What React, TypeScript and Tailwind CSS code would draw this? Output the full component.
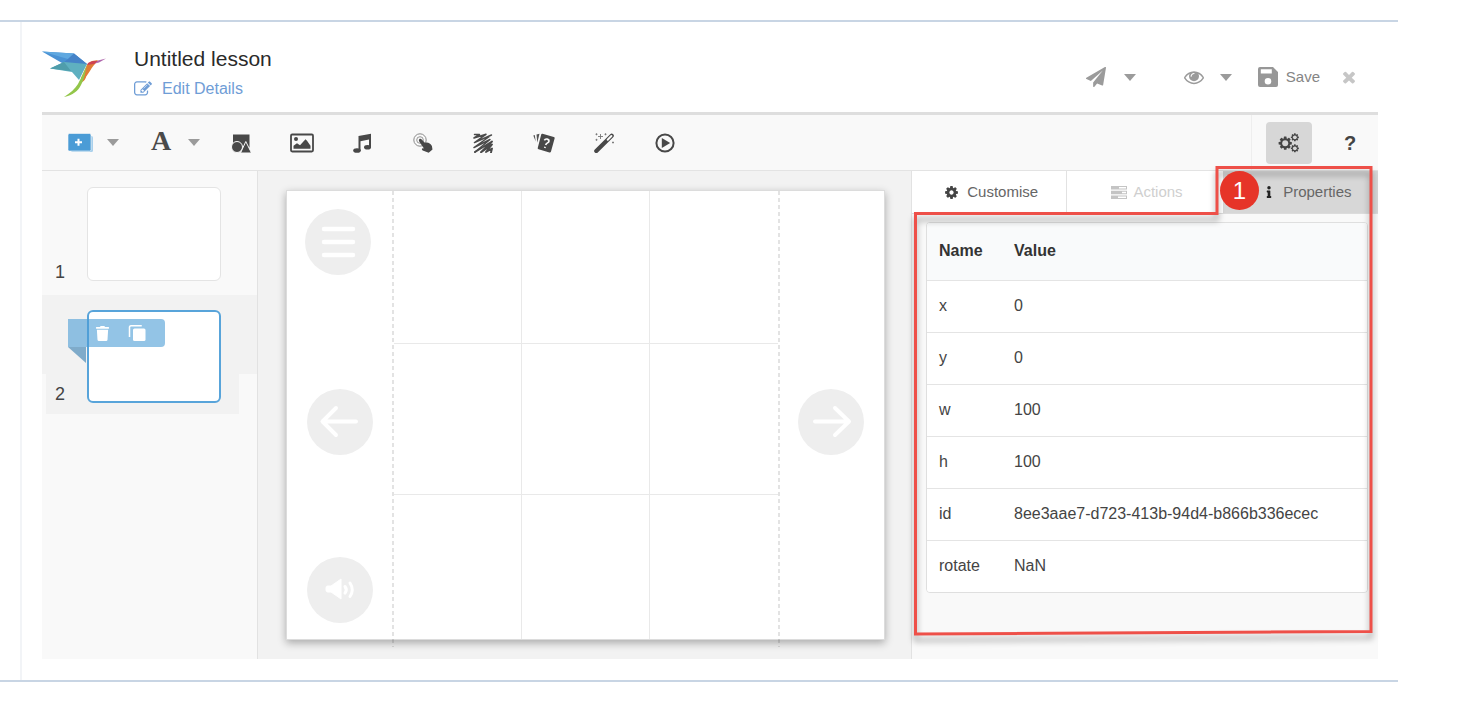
import type { ReactNode } from 'react';
import { FaInfo, FaTrash } from 'react-icons/fa';

const COG =
  'M1152 896q0-106-75-181t-181-75-181 75-75 181 75 181 181 75 181-75 75-181zm512-109v222q0 12-8 23t-20 13l-185 28q-19 54-39 91 35 50 107 138 10 12 10 25t-9 23q-27 37-99 108t-94 71q-12 0-26-9l-138-108q-44 23-91 38-16 136-29 186-7 28-36 28h-222q-14 0-24.5-8.5t-11.5-21.5l-28-184q-49-16-90-37l-141 107q-10 9-25 9-14 0-25-11-126-114-165-168-7-10-7-23 0-12 8-23 15-21 51-66.5t54-70.5q-27-50-41-99l-183-27q-13-2-21-12.5t-8-23.5v-222q0-12 8-23t19-13l186-28q14-46 39-92-40-57-107-138-10-12-10-24 0-10 9-23 26-36 98.5-107.5t94.5-71.5q13 0 26 10l138 107q44-23 91-38 16-136 29-186 7-28 36-28h222q14 0 24.5 8.5t11.5 21.5l28 184q49 16 90 37l142-107q9-9 24-9 13 0 25 10 129 119 165 170 7 8 7 22 0 12-8 23-15 21-51 66.5t-54 70.5q26 50 41 98l183 28q13 2 21 12.5t8 23.5z';
const EYE =
  'M1664 960q-152-236-381-353 61 104 61 225 0 185-131.5 316.5t-316.5 131.5-316.5-131.5-131.5-316.5q0-121 61-225-229 117-381 353 133 205 333.5 326.5t434.5 121.5 434.5-121.5 333.5-326.5zm-720-384q0-20-14-34t-34-14q-125 0-214.5 89.5t-89.5 214.5q0 20 14 34t34 14 34-14 14-34q0-86 61-147t147-61q20 0 34-14t14-34zm848 384q0 34-20 69-140 230-376.5 368.5t-499.5 138.5-499.5-139-376.5-368q-20-35-20-69t20-69q140-229 376.5-368t499.5-139 499.5 139 376.5 368q20 35 20 69z';
const EDIT =
  'M888 1184l116-116-152-152-116 116v56h96v96h56zm440-720q-16-16-33 1l-350 350q-17 17-1 33t33-1l350-350q17-17 1-33zm80 594v190q0 119-84.5 203.5t-203.5 84.5h-832q-119 0-203.5-84.5t-84.5-203.5v-832q0-119 84.5-203.5t203.5-84.5h832q63 0 117 25 15 7 18 23 3 17-9 29l-49 49q-14 14-32 8-23-6-45-6h-832q-66 0-113 47t-47 113v832q0 66 47 113t113 47h832q66 0 113-47t47-113v-126q0-13 9-22l64-64q15-15 35-7t20 29zm-96-738l288 288-672 672h-288v-288zm444 132l-92 92-288-288 92-92q28-28 68-28t68 28l152 152q28 28 28 68t-28 68z';
const PLANE =
  'M1764 11q33 24 27 64l-256 1536q-5 29-32 45-14 8-31 8-11 0-24-5l-453-185-242 295q-18 23-49 23-13 0-22-4-19-7-30.5-23.5t-11.5-36.5v-349l864-1059-1069 925-395-162q-37-14-40-55-2-40 32-59l1664-960q15-9 32-9 20 0 36 11z';
const TIMES =
  'M1490 1322q0 40-28 68l-136 136q-28 28-68 28t-68-28l-294-294-294 294q-28 28-68 28t-68-28l-136-136q-28-28-28-68t28-68l294-294-294-294q-28-28-28-68t28-68l136-136q28-28 68-28t68 28l294 294 294-294q28-28 68-28t68 28l136 136q28 28 28 68t-28 68l-294 294 294 294q28 28 28 68z';

function Glyph({ d, className }: { d: string; className: string }) {
  return (
    <svg viewBox="0 0 1792 1792" fill="currentColor" aria-hidden="true" className={className}>
      <path d={d} />
    </svg>
  );
}

function Caret() {
  return (
    <svg viewBox="0 0 12 7" className="h-[7px] w-3 fill-[#9b9b9b]" aria-hidden="true">
      <path d="M0 0h12L6 7z" />
    </svg>
  );
}

function CaretButton({ label, className }: { label: string; className?: string }) {
  return (
    <button type="button" aria-label={label} className={`flex h-10 w-5 items-center justify-center ${className ?? ''}`}>
      <Caret />
    </button>
  );
}

function Logo() {
  return (
    <svg viewBox="0 0 64 48" className="h-12 w-16" aria-hidden="true">
      <path d="M0 .5L32 2.500L45 13L20 12z" fill="#4a92d4" />
      <path d="M0 .5L32 2.500L26 8z" fill="#5fa8e0" />
      <path d="M26 8l6-5.500L45 13l-2 2-22-3z" fill="#4583c8" />
      <path d="M8 17.500L22 11l23 2-8 16-7-8z" fill="#5fb0c0" />
      <path d="M8 17.500L22 11l7 9z" fill="#4f9dab" />
      <path d="M49 12c-5 4-4 9-5 14-1 3-2 4-4 5l-1-4 6-13z" fill="#e57b33" />
      <path d="M45 14l5-4 6-1-3 4c-3 3-6 9-12 17z" fill="#e07c36" />
      <path d="M45 14c1-3 4-4 8-4h4l-5 3z" fill="#cf4352" />
      <path d="M56 9.500l8-2-7 4-4 1z" fill="#b068ad" />
      <path d="M45 14c-3 7-6 13-9 19-3 5-8 9-14 13 9-2 14-6 17-12 3-5 4-12 6-20z" fill="#93c64a" />
    </svg>
  );
}

function AddSlideIcon() {
  return (
    <svg viewBox="0 0 26 20" className="h-5 w-[26px]" aria-hidden="true">
      <rect x="3" y="3" width="22" height="16" rx="1.5" fill="#a9d0ec" />
      <rect x="0" y="0.5" width="23" height="17.5" rx="1.5" fill="#4b9cd6" stroke="#f9f9f9" strokeWidth="0.6" />
      <path d="M10.500 5.800v7M7 9.300h7" stroke="#fff" strokeWidth="2" />
    </svg>
  );
}

function ShapesIcon() {
  return (
    <svg viewBox="0 0 20 20" className="size-5" aria-hidden="true">
      <rect x="2" y="1.500" width="16.500" height="13" fill="#484848" />
      <circle cx="6" cy="14" r="5.500" fill="#484848" stroke="#f9f9f9" strokeWidth="1" />
      <path d="M14.800 8.500L20.500 20h-11z" fill="#484848" stroke="#f9f9f9" strokeWidth="1" />
    </svg>
  );
}

function ImageIcon() {
  return (
    <svg viewBox="0 0 24 20" className="h-5 w-6" aria-hidden="true">
      <rect x="1" y="1.500" width="22" height="17" rx="1.200" fill="none" stroke="#484848" strokeWidth="1.800" />
      <circle cx="6" cy="6" r="2" fill="#484848" />
      <path d="M3.500 15.800v-3l3.500-2.500 3 2 5.500-6 1.500 1.500 3.500 5v3z" fill="#484848" />
    </svg>
  );
}

function MusicIcon() {
  return (
    <svg viewBox="0 0 20 20" className="size-5" aria-hidden="true">
      <path d="M6.500 3L19 .8v13.500h-2V6.500l-8.500 1.700V18h-2z" fill="#484848" />
      <ellipse cx="5" cy="17.500" rx="3.800" ry="2.300" fill="#484848" />
      <ellipse cx="15.500" cy="14.200" rx="3.500" ry="2.300" fill="#484848" />
    </svg>
  );
}

function TouchIcon() {
  return (
    <svg viewBox="0 0 20 20" className="size-5" aria-hidden="true">
      <circle cx="7" cy="7" r="6.200" fill="none" stroke="#8a8a8a" strokeWidth="1" />
      <circle cx="7" cy="7" r="3.300" fill="none" stroke="#8a8a8a" strokeWidth="0.900" />
      <path d="M6.300 6.300c1-.9 1.900-.3 2.600.5l3 3c3-1 5.500.6 7 3.200l.6 3.500-3.800 3.200-6-2.300c-1.200-.6-1.200-2.300.5-2.100l.8.1-4.500-6.500c-.6-.9-.9-1.900-.2-2.600z" fill="#484848" />
    </svg>
  );
}

function ScribbleIcon() {
  return (
    <svg viewBox="0 0 20 20" className="size-5" fill="none" stroke="#4a4a4a" strokeLinejoin="round" strokeLinecap="round" aria-hidden="true">
      <path d="M1.500 1.500h5L1 5l12-3.700L1.500 9.500 18.500 2 1 14.500 17 6.500 2 19" strokeWidth="1.500" />
      <path d="M2 19L19 8.500 8 19.300l11-7.800-6 7.500 6-3.500-1 4" strokeWidth="1.900" />
    </svg>
  );
}

function CardsIcon() {
  return (
    <svg viewBox="0 0 22 20" className="h-5 w-[22px]" aria-hidden="true">
      <path d="M.3 2.500l1.500-.6.9 6.500zM3.500 1.500l3-.8-2.200 9z" fill="#555" />
      <path d="M9.500.8L20.800 4c.8.2 1 .7.8 1.400L18 18.500c-.3.900-.8 1.200-1.600 1L5.600 16.300c-.8-.2-1-.8-.8-1.500L8.200 1.600c.2-.7.6-1 1.300-.8z" fill="#484848" />
      <path d="M11.400 7.300c1-2.200 4.900-1.400 4.500 1-.3 1.700-2.800 1.500-3.200 3.700M12.100 13.700l-.3 1.300" fill="none" stroke="#f9f9f9" strokeWidth="1.700" />
    </svg>
  );
}

function WandIcon() {
  return (
    <svg viewBox="0 0 20 20" className="size-5" aria-hidden="true">
      <path d="M2.300 18L17.700 2.800" stroke="#484848" strokeWidth="4.200" strokeLinecap="round" />
      <path d="M13.700 6.700l3.700-3.700" stroke="#f9f9f9" strokeWidth="2" strokeLinecap="round" />
      <path d="M6.500 1v5M4 3.500h5M2.500.3v2M1.500 1.300h2M11.500.3v2M10.500 1.300h2M2.500 5.800v2M1.500 6.800h2M19 8.500v2M18 9.500h2" stroke="#777" strokeWidth="0.900" />
    </svg>
  );
}

function PlayIcon() {
  return (
    <svg viewBox="0 0 20 20" className="size-5" aria-hidden="true">
      <circle cx="10" cy="10" r="8.600" fill="none" stroke="#484848" strokeWidth="2" />
      <path d="M6.800 5l8.400 5-8.400 5z" fill="#484848" />
    </svg>
  );
}

function Gear({ transform, hole }: { transform: string; hole: number }) {
  return (
    <g transform={transform}>
      <path d={COG} />
      <circle cx="896" cy="896" r={hole} fill="#d7d7d7" />
    </g>
  );
}

function GearsIcon() {
  return (
    <svg viewBox="0 0 22 20" className="h-5 w-[22px] fill-[#444]" aria-hidden="true">
      <Gear transform="translate(-0.500 2.500) scale(0.0086)" hole={350} />
      <Gear transform="translate(12.200 -0.300) scale(0.0052)" hole={360} />
      <Gear transform="translate(12.200 10.700) scale(0.0052)" hole={360} />
    </svg>
  );
}

function SaveIcon() {
  return (
    <svg viewBox="0 0 20 20" className="size-5" aria-hidden="true">
      <path
        fillRule="evenodd"
        fill="#979797"
        d="M2 0h13l5 5v13a2 2 0 0 1-2 2H2a2 2 0 0 1-2-2V2a2 2 0 0 1 2-2zm.8 2.300v4.200h11V2.300zM10 11a3.300 3.300 0 1 0 0 6.600A3.300 3.300 0 0 0 10 11z"
      />
    </svg>
  );
}

const tools: { label: string; icon: ReactNode }[] = [
  { label: 'Shapes', icon: <ShapesIcon /> },
  { label: 'Image', icon: <ImageIcon /> },
  { label: 'Audio', icon: <MusicIcon /> },
  { label: 'Hotspot', icon: <TouchIcon /> },
  { label: 'Scratch', icon: <ScribbleIcon /> },
  { label: 'Flashcards', icon: <CardsIcon /> },
  { label: 'Effects', icon: <WandIcon /> },
  { label: 'Video', icon: <PlayIcon /> },
];

const properties = [
  ['x', '0'],
  ['y', '0'],
  ['w', '100'],
  ['h', '100'],
  ['id', '8ee3aae7-d723-413b-94d4-b866b336ecec'],
  ['rotate', 'NaN'],
];

function Header() {
  return (
    <header className="flex h-[90px] items-center">
      <div className="mt-4 w-[92px] shrink-0">
        <Logo />
      </div>
      <div className="mt-4 flex-1">
        <h1 className="text-[21px] leading-7 text-[#2a2a2a]">Untitled lesson</h1>
        <a href="#details" className="flex items-center gap-2.5 text-base leading-8 text-[#6f9dd6]">
          <Glyph d={EDIT} className="size-[18px]" />
          Edit Details
        </a>
      </div>
      <div className="mt-5 flex items-center pr-5 text-[#9b9b9b]">
        <button type="button" aria-label="Publish">
          <Glyph d={PLANE} className="size-5" />
        </button>
        <CaretButton label="Publish options" className="ml-3.5" />
        <button type="button" aria-label="Preview" className="ml-11">
          <Glyph d={EYE} className="size-5" />
        </button>
        <CaretButton label="Preview options" className="ml-3" />
        <button type="button" className="ml-[22px] flex items-center gap-2 text-[15px] text-[#858585]">
          <SaveIcon />
          Save
        </button>
        <button type="button" aria-label="Close" className="ml-5 text-[#c6c6c6]">
          <Glyph d={TIMES} className="size-[18px]" />
        </button>
      </div>
    </header>
  );
}

function Toolbar() {
  return (
    <div className="flex h-[59px] items-center border-t-[3px] border-b border-t-[#dedede] border-b-[#e3e3e3] bg-[#f9f9f9]">
      <button type="button" aria-label="Add slide" className="ml-4 flex h-10 w-[45px] items-center justify-center">
        <AddSlideIcon />
      </button>
      <CaretButton label="Add slide options" />
      <button type="button" className="ml-5 h-10 w-9 pb-1 font-['Liberation_Serif',serif] text-[28px] font-bold leading-9 text-[#4a4a4a]">
        A
      </button>
      <CaretButton label="Text options" className="ml-[5px]" />
      <div className="ml-[7px] flex w-[484px]">
        {tools.map((tool) => (
          <button key={tool.label} type="button" aria-label={tool.label} className="flex h-10 flex-1 items-center justify-center">
            {tool.icon}
          </button>
        ))}
      </div>
      <div className="ml-auto flex h-full w-[127px] items-center border-l border-[#eeeeee] pl-3.5">
        <button type="button" aria-label="Settings" className="flex h-[42px] w-[46px] items-center justify-center rounded bg-[#d7d7d7]">
          <GearsIcon />
        </button>
        <button type="button" className="ml-[22px] w-8 text-xl font-bold text-[#444]">
          ?
        </button>
      </div>
    </div>
  );
}

function SlideList() {
  return (
    <ol className="w-[216px] shrink-0 border-r border-[#e2e2e2] bg-[#f9f9f9] text-lg text-[#444]">
      <li className="flex h-[124px] items-start pt-4">
        <span className="w-[45px] pt-[71px] pl-[13px] leading-7">1</span>
        <button type="button" aria-label="Slide 1" className="h-[94px] w-[134px] rounded-md border border-[#e4e4e4] bg-white" />
      </li>
      <li className="relative flex h-[119px] items-start bg-[linear-gradient(#f2f2f2,#f2f2f2),linear-gradient(#f2f2f2,#f2f2f2)] bg-no-repeat pt-[15px] [background-position:0_0,4px_0] [background-size:100%_79px,193px_100%]">
        <span className="w-[45px] pt-[70px] pl-[13px] leading-7">2</span>
        <button type="button" aria-label="Slide 2" className="h-[93px] w-[134px] rounded-md border-2 border-[#58a4da] bg-white" />
        <div className="absolute top-6 left-[26px] flex h-7 w-[97px] items-center gap-[18px] rounded-r bg-[#4b9cd6]/60 pl-[27px] text-white">
          <button type="button" aria-label="Delete slide">
            <FaTrash className="size-[15px]" />
          </button>
          <button type="button" aria-label="Duplicate slide">
            <svg viewBox="0 0 18 18" className="size-[18px]" aria-hidden="true">
              <path d="M13 2.500V1.800H3A1.500 1.500 0 0 0 1.500 3v10" fill="none" stroke="#fff" strokeWidth="1.500" />
              <rect x="5" y="4.500" width="12.500" height="12.500" rx="1.500" fill="#fff" />
            </svg>
          </button>
          <svg viewBox="0 0 18 16" className="absolute top-full left-0 h-4 w-[18px] fill-[#7fabca]" aria-hidden="true">
            <path d="M0 0h18v16z" />
          </svg>
        </div>
      </li>
    </ol>
  );
}

function RoundButton({ label, className, children }: { label: string; className: string; children: ReactNode }) {
  return (
    <button type="button" aria-label={label} className={`flex size-[66px] items-center justify-center rounded-full bg-[#eeeeee] ${className}`}>
      <svg viewBox="0 0 66 66" className="size-[66px]" fill="none" stroke="#fff" strokeWidth="4.500" strokeLinecap="round" strokeLinejoin="round" aria-hidden="true">
        {children}
      </svg>
    </button>
  );
}

function Dashes() {
  return <div className="-mb-2 w-[2px] bg-[repeating-linear-gradient(#0000001c_0_4px,transparent_4px_7px)]" />;
}

const cells = [
  'border-r border-b',
  'border-r border-b',
  'border-b',
  'border-r border-b',
  'border-r border-b',
  'border-b',
  'border-r',
  'border-r',
  '',
];

function Stage() {
  return (
    <main className="flex-1 bg-[#f2f2f2] pt-[19px] pr-[26px] pl-7">
      <div className="flex h-[450px] border border-[#dcdcdc] bg-white shadow-[0_3px_8px_rgba(0,0,0,0.3)]">
        <div className="flex w-[105px] shrink-0 flex-col items-center">
          <RoundButton label="Menu" className="mt-[18px] mr-1">
            <path d="M19 20h29M19 33h29M19 46h29" />
          </RoundButton>
          <RoundButton label="Previous" className="mt-[114px]">
            <path d="M49 32.500H16M29 19L15.500 32.500L29 46" strokeWidth="4" />
          </RoundButton>
          <RoundButton label="Sound" className="mt-[102px]">
            <path d="M19 30.500c0-1 .6-1.500 1.500-1.500H24l10-7v20l-10-7h-3.500c-.9 0-1.500-.6-1.500-1.500z" fill="#fff" strokeWidth="1" />
            <path d="M38 29.500q2.500 3.300 0 6.600M43 26q4.500 6.800 0 13.500" strokeWidth="3" />
          </RoundButton>
        </div>
        <Dashes />
        <div className="grid flex-1 grid-cols-3 grid-rows-[153px_151px_1fr]">
          {cells.map((edges, i) => (
            <div key={i} className={`border-[#e9e9e9] ${edges}`} />
          ))}
        </div>
        <Dashes />
        <div className="w-[104px] shrink-0 pt-[198px] pl-[18px]">
          <RoundButton label="Next" className="">
            <path d="M17 32.500H50M37 19L51 32.500L37 46" strokeWidth="4" />
          </RoundButton>
        </div>
      </div>
    </main>
  );
}

function Inspector() {
  return (
    <aside className="relative w-[467px] shrink-0 border-l border-[#e2e2e2] bg-[#f9f9f9]">
      <div role="tablist" className="grid h-[43px] grid-cols-3 border-b border-[#dcdcdc] text-[15px] text-[#666]">
        <button type="button" role="tab" aria-selected="false" className="flex items-center justify-center gap-2 border-r border-[#e2e2e2] bg-white pl-1">
          <Glyph d={COG} className="size-[15px] text-[#444]" />
          Customise
        </button>
        <button type="button" role="tab" aria-selected="false" disabled className="flex items-center justify-center gap-1.5 bg-white pl-1 text-[#cfcfcf]">
          <svg viewBox="0 0 16 13" className="h-[13px] w-4" fill="#c4c4c4" aria-hidden="true">
            <path fillRule="evenodd" d="M0 0h16v3.500H0zM8 1v1.500h7V1zM0 4.700h16v3.500H0zM11 5.700v1.500h4V5.700zM0 9.400h16V13H0zM7 10.500V12h8v-1.500z" />
          </svg>
          Actions
        </button>
        <button type="button" role="tab" aria-selected="true" className="flex items-center justify-center gap-2 bg-[#d7d7d7] pl-3.5">
          <FaInfo className="size-3 text-[#222]" />
          Properties
        </button>
      </div>
      <div className="mt-2 mr-2.5 ml-3.5 overflow-hidden rounded border border-[#dfdfdf]">
        <table className="w-full border-collapse bg-white text-left text-base text-[#444]">
          <thead className="bg-[#f9fafb] text-[#333]">
            <tr className="h-[57px]">
              <th className="w-[75px] pl-3 font-bold">Name</th>
              <th className="pl-3 font-bold">Value</th>
            </tr>
          </thead>
          <tbody>
            {properties.map(([name, value]) => (
              <tr key={name} className="h-[52px] border-t border-[#e4e4e4]">
                <td className="pl-3">{name}</td>
                <td className="pl-3">{value}</td>
              </tr>
            ))}
          </tbody>
        </table>
      </div>
      <svg
        viewBox="0 0 466 480"
        className="pointer-events-none absolute -top-2.5 left-0 h-[480px] w-[466px] overflow-visible drop-shadow-[0_6px_3px_rgba(0,0,0,0.35)]"
        aria-hidden="true"
      >
        <path d="M305 6.500H459V470.500L3.500 473V52.500H305z" fill="none" stroke="#ee5049" strokeWidth="3" />
      </svg>
      <span className="absolute top-0 left-[308px] flex size-[39px] items-center justify-center rounded-full bg-[#e63428] text-2xl text-white">
        1
      </span>
    </aside>
  );
}

export default function App() {
  return (
    <div className="bg-white pt-5 pr-[82px] font-['Liberation_Sans',Arial,sans-serif]">
      <div className="border-y-2 border-[#c8d5e4] pl-5">
        <div className="border-l-2 border-[#f2f4f7] pr-5 pb-[21px] pl-5">
          <Header />
          <Toolbar />
          <div className="flex h-[488px]">
            <SlideList />
            <Stage />
            <Inspector />
          </div>
        </div>
      </div>
    </div>
  );
}
